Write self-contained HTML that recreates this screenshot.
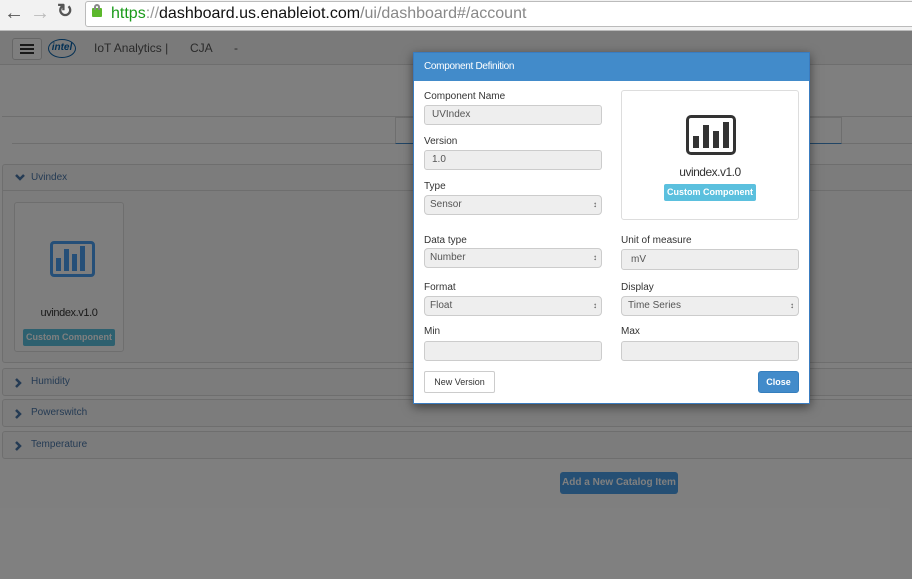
<!DOCTYPE html>
<html style="background:#808080"><head><meta charset="utf-8"><style>
*{box-sizing:border-box;margin:0;padding:0}
html,body{background:#808080}
body{width:912px;height:579px;overflow:hidden;font-family:"Liberation Sans",sans-serif;position:relative}
.a{position:absolute}
.lbl{position:absolute;font-size:10px;color:#333}
.inp{position:absolute;background:#eee;border:1px solid #ccc;border-radius:3px;font-size:10px;color:#555;padding-left:7px;line-height:18px;height:20px}
.sel{border-radius:4px}
.sel:after{content:"\2195";position:absolute;right:4px;top:0;font-size:8px;color:#444}
.panel{position:absolute;left:2px;width:912px;border:1px solid #ddd;border-radius:3px;background:#f8f8f8;font-size:10px;color:#4a76a8}
.chev{position:absolute;left:12px;top:9px}
</style></head><body>
<div class="a" style="left:0;top:0;width:912px;height:579px;background:#fff"></div>
<div class="a" style="left:0;top:31px;width:912px;height:34px;background:#f4f4f4;border-bottom:1px solid #ddd"></div>
<div class="a" style="left:12px;top:38px;width:30px;height:22px;border:1px solid #ccc;border-radius:3px;background:#fcfcfc"></div>
<div class="a" style="left:20px;top:44px;width:14px;height:2px;background:#333;box-shadow:0 4px 0 #333,0 8px 0 #333"></div>
<div class="a" style="left:48px;top:39px;width:28px;height:19px;border:1.5px solid #0860a8;border-radius:50%;font-size:10px;color:#0860a8;text-align:center;line-height:16px;font-style:italic;font-weight:bold">intel</div>
<div class="a" style="left:94px;top:41px;font-size:12px;color:#555">IoT Analytics |</div>
<div class="a" style="left:190px;top:41px;font-size:12px;color:#555">CJA</div>
<div class="a" style="left:234px;top:41px;font-size:12px;color:#555">-</div>
<div class="a" style="left:2px;top:116px;width:910px;height:1px;background:#ddd"></div>
<div class="a" style="left:12px;top:143px;width:900px;height:1px;background:#ddd"></div>
<div class="a" style="left:395px;top:117px;width:447px;height:27px;border:1px solid #ddd;border-bottom:1px solid #428bca;background:#fff"></div>
<div class="panel" style="top:164px;height:199px">
 <div style="height:26px;line-height:26px;border-bottom:1px solid #ddd;padding-left:28px;position:relative"><svg class="chev" style="top:9px" width="10" height="8"><path d="M1 1 L5 5 L9 1" stroke="#4a76a8" stroke-width="2.5" fill="none"/></svg>Uvindex</div>
</div>
<div class="a" style="left:14px;top:202px;width:110px;height:150px;border:1px solid #ddd;border-radius:3px;background:#fdfdfd"></div>
<div class="a" style="left:50px;top:241px;width:45px;height:36px;border:3px solid #4a9ff0;border-radius:4px"></div>
<svg class="a" style="left:50px;top:241px" width="45" height="36"><rect x="6" y="17" width="5" height="13" fill="#4a9ff0"/><rect x="14" y="8" width="5" height="22" fill="#4a9ff0"/><rect x="22" y="13" width="5" height="17" fill="#4a9ff0"/><rect x="30" y="5" width="5" height="25" fill="#4a9ff0"/></svg>
<div class="a" style="left:14px;top:307px;width:110px;text-align:center;font-size:11px;color:#333;letter-spacing:-0.4px">uvindex.v1.0</div>
<div class="a" style="left:23px;top:329px;width:92px;height:17px;background:#5bc0de;border-radius:2px;color:#fff;font-size:9px;font-weight:bold;text-align:center;line-height:17px">Custom Component</div>
<div class="panel" style="top:368px;height:28px;line-height:26px;padding-left:28px"><svg class="chev" style="top:9px" width="8" height="10"><path d="M1 1 L5 5 L1 9" stroke="#4a76a8" stroke-width="2.5" fill="none"/></svg>Humidity</div>
<div class="panel" style="top:399px;height:28px;line-height:26px;padding-left:28px"><svg class="chev" style="top:9px" width="8" height="10"><path d="M1 1 L5 5 L1 9" stroke="#4a76a8" stroke-width="2.5" fill="none"/></svg>Powerswitch</div>
<div class="panel" style="top:431px;height:28px;line-height:26px;padding-left:28px"><svg class="chev" style="top:9px" width="8" height="10"><path d="M1 1 L5 5 L1 9" stroke="#4a76a8" stroke-width="2.5" fill="none"/></svg>Temperature</div>
<div class="a" style="left:560px;top:472px;width:118px;height:22px;background:#4a9ee8;border-radius:3px;color:#fff;font-size:10px;text-align:center;line-height:22px;font-weight:bold">Add a New Catalog Item</div>
<!-- overlay -->
<svg class="a" style="left:0;top:31px;z-index:5" width="912" height="548"><rect x="0" y="0" width="912" height="548" fill="#000" fill-opacity="0.5"/></svg>
<div style="position:absolute;left:0;top:0;z-index:10;width:912px;height:579px">
<div class="a" style="left:0;top:0;width:912px;height:31px;background:#f2f2f2;border-bottom:1px solid #bbb"></div>
<div class="a" style="left:4px;top:3px;font-size:20px;color:#555;line-height:20px">&#8592;</div>
<div class="a" style="left:30px;top:3px;font-size:20px;color:#bbb;line-height:20px">&#8594;</div>
<div class="a" style="left:57px;top:2px;font-size:19px;color:#555;line-height:20px;font-weight:bold">&#8635;</div>
<div class="a" style="left:85px;top:1px;width:830px;height:26px;background:#fff;border:1px solid #bbb;border-radius:3px"></div>
<div class="a" style="left:92px;top:8px;width:10px;height:9px;background:#5cb82c;border-radius:1px"></div>
<div class="a" style="left:94px;top:4px;width:6px;height:6px;border:2px solid #888;border-bottom:none;border-radius:3px 3px 0 0"></div>
<div class="a" style="left:111px;top:5px;font-size:16px;line-height:18px;color:#111;white-space:nowrap"><span style="color:#1a9a1a">https</span><span style="color:#999">://</span>dashboard.us.enableiot.com<span style="color:#888">/ui/dashboard#/account</span></div>
<div class="a" style="left:413px;top:52px;width:397px;height:352px;background:#fff;border:1px solid #3a7cc0;box-shadow:0 3px 10px rgba(0,0,0,.5)">
 <div style="height:28px;background:#428bca;color:#fff;font-size:10px;line-height:28px;padding-left:10px;letter-spacing:-0.3px">Component Definition</div>
</div>
<div class="lbl" style="left:424px;top:91px">Component Name</div>
<div class="inp" style="left:424px;top:105px;width:178px">UVIndex</div>
<div class="lbl" style="left:424px;top:136px">Version</div>
<div class="inp" style="left:424px;top:150px;width:178px">1.0</div>
<div class="lbl" style="left:424px;top:181px">Type</div>
<div class="inp sel" style="left:424px;top:195px;width:178px;padding-left:5px">Sensor</div>
<div class="a" style="left:621px;top:90px;width:178px;height:130px;border:1px solid #ddd;border-radius:3px"></div>
<div class="a" style="left:686px;top:115px;width:50px;height:40px;border:3px solid #333;border-radius:5px"></div>
<svg class="a" style="left:686px;top:115px" width="50" height="40"><rect x="7" y="21" width="6" height="12" fill="#333"/><rect x="17" y="10" width="6" height="23" fill="#333"/><rect x="27" y="16" width="6" height="17" fill="#333"/><rect x="37" y="7" width="6" height="26" fill="#333"/></svg>
<div class="a" style="left:621px;top:165px;width:178px;text-align:center;font-size:12px;color:#333;letter-spacing:-0.5px">uvindex.v1.0</div>
<div class="a" style="left:664px;top:184px;width:92px;height:17px;background:#5bc0de;border-radius:2px;color:#fff;font-size:9px;font-weight:bold;text-align:center;line-height:17px">Custom Component</div>
<div class="lbl" style="left:424px;top:235px">Data type</div>
<div class="inp sel" style="left:424px;top:248px;width:178px;padding-left:5px">Number</div>
<div class="lbl" style="left:621px;top:235px">Unit of measure</div>
<div class="inp" style="left:621px;top:249px;width:178px;height:21px;line-height:20px;padding-left:9px">mV</div>
<div class="lbl" style="left:424px;top:282px">Format</div>
<div class="inp sel" style="left:424px;top:296px;width:178px;padding-left:5px">Float</div>
<div class="lbl" style="left:621px;top:282px">Display</div>
<div class="inp sel" style="left:621px;top:296px;width:178px;padding-left:6px">Time Series</div>
<div class="lbl" style="left:424px;top:326px">Min</div>
<div class="inp" style="left:424px;top:341px;width:178px"></div>
<div class="lbl" style="left:621px;top:326px">Max</div>
<div class="inp" style="left:621px;top:341px;width:178px"></div>
<div class="a" style="left:424px;top:371px;width:71px;height:22px;border:1px solid #ccc;border-radius:2px;font-size:9px;color:#333;text-align:center;line-height:20px">New Version</div>
<div class="a" style="left:758px;top:371px;width:41px;height:22px;background:#428bca;border:1px solid #357ebd;border-radius:3px;font-size:9px;color:#fff;text-align:center;line-height:20px;font-weight:bold">Close</div>
</div>
</body></html>
